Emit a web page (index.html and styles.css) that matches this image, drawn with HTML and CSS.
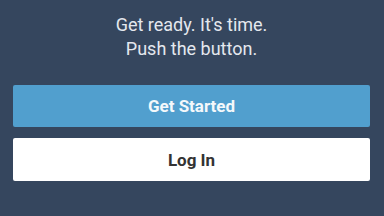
FILE: index.html
```html
<!DOCTYPE html>
<html lang="en">
<head>
    <meta charset="UTF-8">
    <meta name="viewport" content="width=device-width, initial-scale=1.0">
    <title>Welcome</title>
    <link rel="stylesheet" href="styles.css">
</head>
<body>
    <div class="container">
        <p class="intro">Get ready. It's time.<br>Push the button.</p>

        <div class="actions">
            <button type="button" class="btn btn-primary">Get Started</button>
            <button type="button" class="btn btn-light">Log In</button>
        </div>
    </div>
</body>
</html>
```

FILE: styles.css
```css
* {
    margin: 0;
    padding: 0;
    box-sizing: border-box;
}

body {
    font-family: Roboto, 'Liberation Sans', Arial, sans-serif;
    background: #35465e;
    min-height: 100vh;
}

.container {
    padding: 13px 14px 0 13px;
}

.intro {
    color: #e4e8ee;
    font-size: 18px;
    line-height: 24px;
    text-align: center;
}

.actions {
    display: flex;
    flex-direction: column;
    gap: 11px;
    margin-top: 24px;
}

.btn {
    height: 42px;
    border: none;
    border-radius: 2px;
    font-family: inherit;
    font-size: 17px;
    font-weight: 700;
    cursor: pointer;
}

.btn-primary {
    background: #519fce;
    color: #f4f8fb;
}

.btn-light {
    height: 43px;
    background: #ffffff;
    color: #333333;
}
```
